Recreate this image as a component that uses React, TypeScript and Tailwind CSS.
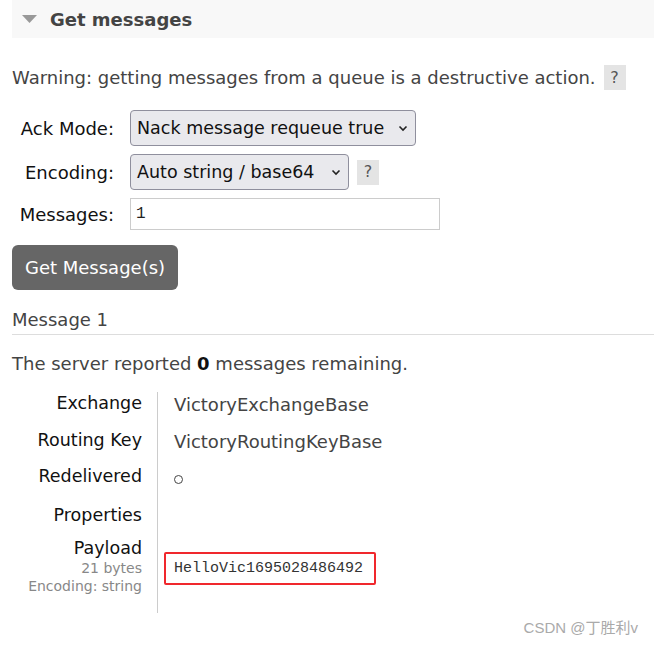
import React from 'react';

const font = { fontFamily: '"DejaVu Sans", Verdana, sans-serif' };
const mono = { fontFamily: '"Liberation Mono", monospace' };

const Help = () => (
    <span className="inline-flex items-center justify-center w-[22px] h-[25px] bg-[#e4e4e4] text-[#555] text-[16px]">?</span>
);

const Chevron = () => (
    <svg className="w-[12px] h-[12px] ml-[12px]" viewBox="0 0 12 12" fill="none" stroke="#222" strokeWidth={1.6}>
        <path d="M2.5 4.5 6 8l3.5-3.5" />
    </svg>
);

export default function App() {
    // label row heights follow the screenshot spacing
    const rows = [
        { label: 'Exchange', value: 'VictoryExchangeBase', h: 'h-[37px]' },
        { label: 'Routing Key', value: 'VictoryRoutingKeyBase', h: 'h-[36px]' },
        { label: 'Redelivered', value: '○', h: 'h-[39px]' },
        { label: 'Properties', value: '', h: 'h-[33px]' }
    ];

    return (
        <div className="w-[654px] h-[647px] bg-white text-[#444] relative overflow-hidden" style={font}>
            {/* Section header */}
            <div className="ml-[12px] h-[38px] bg-[#f8f8f8] flex items-center pl-[10px]">
                <svg className="w-[15px] h-[8px]" viewBox="0 0 15 8">
                    <path d="M0 0h15L7.5 8z" fill="#999" />
                </svg>
                <span className="ml-[13px] text-[18px] font-bold text-[#444]">Get messages</span>
            </div>

            <div className="pl-[12px]">
                {/* Warning */}
                <div className="mt-[27px] h-[25px] flex items-center gap-[8px] text-[18px] leading-[22px]">
                    <span>Warning: getting messages from a queue is a destructive action.</span>
                    <Help />
                </div>

                {/* Form */}
                <div className="mt-[20px] grid grid-cols-[102px_auto] gap-x-[16px] gap-y-[8px] items-center text-[18px] text-[#111]">
                    <span className="text-right">Ack Mode:</span>
                    <div className="flex">
                        <div className="h-[36px] w-[286px] flex items-center justify-between px-[6px] bg-[#e9e9ed] border border-[#8f8f9d] rounded-[4px] text-[17.5px]">
                            <span>Nack message requeue true</span>
                            <Chevron />
                        </div>
                    </div>
                    <span className="text-right">Encoding:</span>
                    <div className="flex items-center gap-[8px]">
                        <div className="h-[36px] w-[219px] flex items-center justify-between px-[6px] bg-[#e9e9ed] border border-[#8f8f9d] rounded-[4px] text-[17.5px]">
                            <span>Auto string / base64</span>
                            <Chevron />
                        </div>
                        <Help />
                    </div>
                    <span className="text-right">Messages:</span>
                    <div className="h-[32px] w-[310px] border border-[#ccc] flex items-center px-[5px]">
                        <span className="text-[16px] text-[#222]" style={mono}>1</span>
                    </div>
                </div>

                {/* Button */}
                <button className="mt-[15px] h-[45px] w-[166px] rounded-[6px] bg-[#666] text-white text-[18px]">
                    Get Message(s)
                </button>

                {/* Message header */}
                <div className="mt-[19px] pb-[3px] leading-[22px] border-b border-[#ddd] text-[18px] text-[#444]">Message 1</div>

                <div className="mt-[18px] leading-[22px] text-[18px] text-[#444]">
                    The server reported <b className="text-[#111] font-bold">0</b> messages remaining.
                </div>

                {/* Details table */}
                <div className="mt-[17px] flex">
                    <div className="w-[146px] pr-[15px] border-r border-[#ccc] flex flex-col items-end text-[17.5px] leading-[22px] text-[#111] pb-[18px]">
                        {rows.map((r) => (
                            <div key={r.label} className={r.h}>{r.label}</div>
                        ))}
                        <div>Payload</div>
                        <div className="text-[14px] text-[#888] leading-[18px]">21 bytes</div>
                        <div className="text-[14px] text-[#888] leading-[18px]">Encoding: string</div>
                    </div>
                    <div className="pl-[6px] flex flex-col text-[18px] leading-[22px] text-[#444]">
                        {rows.map((r) => (
                            <div key={r.label} className={`${r.h} pl-[10px] pt-[2px]`}>
                                {r.value === '○' ? (
                                    <span className="inline-block mt-[6px] w-[9px] h-[9px] rounded-full border border-[#444]" />
                                ) : (
                                    r.value
                                )}
                            </div>
                        ))}
                        <div className="mt-[15px] w-[212px] h-[33px] border-2 border-[#f0282d] rounded-[2px] flex items-center pl-[8px]">
                            <span className="text-[15px] text-[#333]" style={mono}>HelloVic1695028486492</span>
                        </div>
                    </div>
                </div>
            </div>

            {/* Watermark */}
            <div className="absolute right-[16px] bottom-[8px] text-[15px] text-[#aaa]" style={{ fontFamily: '"Liberation Sans", "Noto Sans CJK SC", sans-serif' }}>
                CSDN @丁胜利v
            </div>
        </div>
    );
}
